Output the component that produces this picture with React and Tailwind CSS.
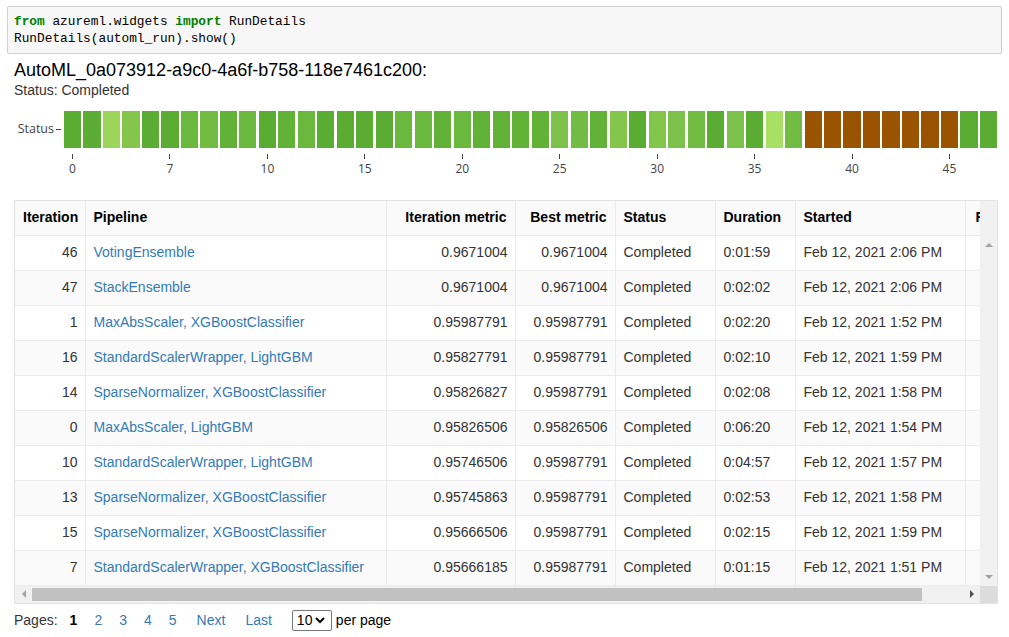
import React from "react";

const G1 = "#5aad32";
const G2 = "#62b237";
const G3 = "#6ab83d";
const G4 = "#72bc44";
const G5 = "#7cc24a";
const G6 = "#84c64c";
const G7 = "#9bd65a";
const G8 = "#a8e063";
const BR = "#9a5300";

// one colour per iteration, 0..47
const bars = [
  G1, G1, G7, G6, G1, G1, G3, G4, G2, G3, G1, G2, G3, G1, G1, G1,
  G1, G3, G3, G2, G3, G2, G2, G2, G2, G5, G4, G2, G6, G1, G6, G5,
  G4, G1, G5, G1, G8, G4, BR, BR, BR, BR, BR, BR, BR, BR, G1, G1,
];

const ticks = { 0: "0", 5: "7", 10: "10", 15: "15", 20: "20", 25: "25", 30: "30", 35: "35", 40: "40", 45: "45" };

const rows = [
  ["46", "VotingEnsemble", "0.9671004", "0.9671004", "0:01:59", "Feb 12, 2021 2:06 PM"],
  ["47", "StackEnsemble", "0.9671004", "0.9671004", "0:02:02", "Feb 12, 2021 2:06 PM"],
  ["1", "MaxAbsScaler, XGBoostClassifier", "0.95987791", "0.95987791", "0:02:20", "Feb 12, 2021 1:52 PM"],
  ["16", "StandardScalerWrapper, LightGBM", "0.95827791", "0.95987791", "0:02:10", "Feb 12, 2021 1:59 PM"],
  ["14", "SparseNormalizer, XGBoostClassifier", "0.95826827", "0.95987791", "0:02:08", "Feb 12, 2021 1:58 PM"],
  ["0", "MaxAbsScaler, LightGBM", "0.95826506", "0.95826506", "0:06:20", "Feb 12, 2021 1:54 PM"],
  ["10", "StandardScalerWrapper, LightGBM", "0.95746506", "0.95987791", "0:04:57", "Feb 12, 2021 1:57 PM"],
  ["13", "SparseNormalizer, XGBoostClassifier", "0.95745863", "0.95987791", "0:02:53", "Feb 12, 2021 1:58 PM"],
  ["15", "SparseNormalizer, XGBoostClassifier", "0.95666506", "0.95987791", "0:02:15", "Feb 12, 2021 1:59 PM"],
  ["7", "StandardScalerWrapper, XGBoostClassifier", "0.95666185", "0.95987791", "0:01:15", "Feb 12, 2021 1:51 PM"],
];

function Arrow({ dir, color }) {
  const pts = {
    up: "0,5 4,1 8,5",
    down: "0,1 4,5 8,1",
    left: "5,0 1,4 5,8",
    right: "1,0 5,4 1,8",
  }[dir];
  const vert = dir === "up" || dir === "down";
  return (
    <svg width={vert ? 8 : 6} height={vert ? 6 : 8} viewBox={vert ? "0 0 8 6" : "0 0 6 8"}>
      <polygon points={pts} fill={color} />
    </svg>
  );
}

export default function App() {
  const th = "h-[34px] px-[8px] text-[14px] font-bold text-black border-r border-b border-[#ebebeb] whitespace-nowrap";
  const td = "h-[35px] px-[8px] text-[14px] text-[#333] border-r border-b border-[#ebebeb] whitespace-nowrap";

  return (
    <div className="min-h-screen bg-white font-['Liberation_Sans',Arial,sans-serif] text-[#333]">
      {/* code cell */}
      <div className="mx-[7px] pt-[6px]">
        <div className="border border-[#cfcfcf] bg-[#f7f7f7] rounded-[2px] pl-[6px] pt-[6px] pb-[6px] font-['Liberation_Mono',monospace] text-[12.8px] leading-[17px] text-[#000]">
          <div>
            <span className="font-bold text-[#008000]">from</span> azureml.widgets{" "}
            <span className="font-bold text-[#008000]">import</span> RunDetails
          </div>
          <div>RunDetails(automl_run).show()</div>
        </div>
      </div>

      {/* title */}
      <div className="pl-[14px] mt-[6px]">
        <div className="text-[18px] leading-[21px] text-black">AutoML_0a073912-a9c0-4a6f-b758-118e7461c200:</div>
        <div className="text-[14px] leading-[17px] mt-[1px] text-[#333]">Status: Completed</div>
      </div>

      {/* status chart */}
      <div className="mt-[12px] pl-[12px] font-['Open_Sans',sans-serif] text-[#444]">
        <div className="flex h-[37px]">
          <div className="w-[52px] flex items-center justify-end text-[12.5px] pr-[3px]">
            Status<span className="ml-[2px] inline-block w-[5px] h-[1px] bg-[#444]" />
          </div>
          <div className="relative w-[933px]">
            <div className="absolute left-0 right-0 top-[18px] h-[1px] bg-[#eeeeee]" />
            <div className="relative grid grid-cols-48 gap-x-[2.4px] h-full">
              {bars.map((c, i) => (
                <div key={i} style={{ backgroundColor: c }} />
              ))}
            </div>
          </div>
        </div>
        <div className="ml-[52px] w-[933px] grid grid-cols-48 gap-x-[2.4px]">
          {bars.map((_, i) => (
            <div key={i} className="flex flex-col items-center">
              {ticks[i] !== undefined && (
                <>
                  <div className="mt-[6px] w-[1px] h-[5px] bg-[#444]" />
                  <div className="mt-[3px] text-[12px] leading-[14px] whitespace-nowrap">{ticks[i]}</div>
                </>
              )}
            </div>
          ))}
        </div>
      </div>

      {/* table */}
      <div className="ml-[14px] mt-[24px] w-[984px] border border-[#e3e3e3]">
        <div className="flex">
          <div className="w-[965px] overflow-hidden">
            <table className="table-fixed border-collapse w-[1050px]">
              <colgroup>
                <col className="w-[70px]" />
                <col className="w-[301px]" />
                <col className="w-[129px]" />
                <col className="w-[100px]" />
                <col className="w-[100px]" />
                <col className="w-[80px]" />
                <col className="w-[170px]" />
                <col className="w-[100px]" />
              </colgroup>
              <thead>
                <tr className="bg-[#fafafa]">
                  <th className={th + " text-left"}>Iteration</th>
                  <th className={th + " text-left"}>Pipeline</th>
                  <th className={th + " text-right"}>Iteration metric</th>
                  <th className={th + " text-right"}>Best metric</th>
                  <th className={th + " text-left"}>Status</th>
                  <th className={th + " text-left"}>Duration</th>
                  <th className={th + " text-left"}>Started</th>
                  <th className={th + " text-left pl-[10px]"}>Run</th>
                </tr>
              </thead>
              <tbody>
                {rows.map((r, i) => (
                  <tr key={i} className={i % 2 === 1 ? "bg-[#fafafa]" : "bg-white"}>
                    <td className={td + " text-right pr-[7px]"}>{r[0]}</td>
                    <td className={td + " text-left"}>
                      <span className="text-[#337ab7]">{r[1]}</span>
                    </td>
                    <td className={td + " text-right pr-[7px]"}>{r[2]}</td>
                    <td className={td + " text-right pr-[7px]"}>{r[3]}</td>
                    <td className={td + " text-left"}>Completed</td>
                    <td className={td + " text-left"}>{r[4]}</td>
                    <td className={td + " text-left"}>{r[5]}</td>
                    <td className={td} />
                  </tr>
                ))}
              </tbody>
            </table>
          </div>
          {/* vertical scrollbar */}
          <div className="w-[17px] bg-[#f1f1f1] flex flex-col items-center">
            <div className="h-[35px]" />
            <div className="mt-[6px]">
              <Arrow dir="up" color="#a3a3a3" />
            </div>
            <div className="flex-1" />
            <div className="mb-[6px]">
              <Arrow dir="down" color="#a3a3a3" />
            </div>
          </div>
        </div>
        {/* horizontal scrollbar */}
        <div className="flex h-[17px]">
          <div className="w-[965px] bg-[#f1f1f1] flex items-center">
            <div className="w-[17px] flex justify-center">
              <Arrow dir="left" color="#a3a3a3" />
            </div>
            <div className="w-[890px] h-[13px] bg-[#c1c1c1]" />
            <div className="flex-1" />
            <div className="w-[17px] flex justify-center">
              <Arrow dir="right" color="#505050" />
            </div>
          </div>
          <div className="w-[17px] bg-[#dcdcdc]" />
        </div>
      </div>

      {/* pagination */}
      <div className="ml-[14px] mt-[6px] flex items-center text-[14px] text-[#333] h-[21px]">
        <span>Pages:</span>
        <span className="ml-[12px] font-bold text-black">1</span>
        <span className="ml-[17px] text-[#337ab7]">2</span>
        <span className="ml-[17px] text-[#337ab7]">3</span>
        <span className="ml-[17px] text-[#337ab7]">4</span>
        <span className="ml-[17px] text-[#337ab7]">5</span>
        <span className="ml-[20px] text-[#337ab7]">Next</span>
        <span className="ml-[20px] text-[#337ab7]">Last</span>
        <div className="ml-[20px] w-[40px] h-[21px] border border-[#767676] rounded-[2px] flex items-center pl-[4px] gap-[3px] text-black">
          <span>10</span>
          <svg width="10" height="7" viewBox="0 0 10 7">
            <polyline points="1,1 5,5 9,1" fill="none" stroke="#000" strokeWidth="2" />
          </svg>
        </div>
        <span className="ml-[4px] text-black">per page</span>
      </div>
    </div>
  );
}
